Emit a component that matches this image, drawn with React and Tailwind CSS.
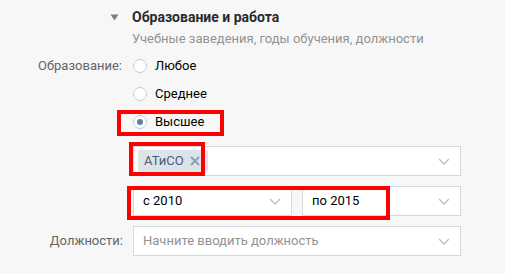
import React from "react";

const Chevron = () => (
  <svg width="12" height="7" viewBox="0 0 12 7" className="shrink-0">
    <path d="M1 1l5 5 5-5" fill="none" stroke="#b6bfc9" strokeWidth="1.3" />
  </svg>
);

const Radio = ({ checked, label }) => (
  <div className="flex items-center h-[28px]">
    <span className="w-[14px] h-[14px] rounded-full border border-[#c1cbd6] bg-white flex items-center justify-center">
      {checked && <span className="w-[6px] h-[6px] rounded-full bg-[#5c7fa6]" />}
    </span>
    <span className="ml-[8px] text-[13px] text-[#000]">{label}</span>
  </div>
);

const Select = ({ children, className = "" }) => (
  <div
    className={`h-[30px] bg-white border border-[#d3d9de] flex items-center pl-[9px] pr-[10px] ${className}`}
  >
    <div className="flex-1 flex items-center text-[13px] text-[#000]">{children}</div>
    <Chevron />
  </div>
);

export default function App() {
  const education = [
    { label: "Любое", checked: false },
    { label: "Среднее", checked: false },
    { label: "Высшее", checked: true },
  ];

  return (
    <div
      className="relative w-[505px] h-[274px] bg-[#f7f7f7] overflow-hidden"
      style={{ fontFamily: "Roboto, 'Noto Sans', sans-serif" }}
    >
      {/* section header */}
      <div className="pt-[8px] pl-[110px]">
        <div className="flex items-center h-[18px]">
          <span className="w-[22px] flex items-center">
            <svg width="9" height="7" viewBox="0 0 9 7">
              <path d="M0.5 0.5h8l-4 6z" fill="#7d7d7d" />
            </svg>
          </span>
          <span className="text-[14px] font-bold text-[#2a2a2a]">Образование и работа</span>
        </div>
        <div className="pl-[22px] mt-[5px] text-[13px] leading-[16px] text-[#939393]">
          Учебные заведения, годы обучения, должности
        </div>
      </div>

      {/* education */}
      <div className="flex mt-[5px]">
        <div className="w-[122px] text-right text-[13px] text-[#656565] leading-[28px]">
          Образование:
        </div>
        <div className="ml-[11px]">
          {education.map((e) => (
            <Radio key={e.label} label={e.label} checked={e.checked} />
          ))}
        </div>
      </div>

      <div className="flex flex-col gap-[10px] mt-[10px] ml-[133px] w-[328px]">
        <Select>
          <span className="inline-flex items-center h-[22px] bg-[#dde3ea] rounded-[2px] pl-[6px] pr-[8px] ml-[-5px] text-[13px] text-[#4a5c72]">
            АТиСО
            <svg width="10" height="10" viewBox="0 0 10 10" className="ml-[6px]">
              <path d="M1 1l8 8M9 1l-8 8" stroke="#8fa1b3" strokeWidth="2" />
            </svg>
          </span>
        </Select>
        <div className="flex gap-[10px]">
          <Select className="flex-1">с 2010</Select>
          <Select className="flex-1">по 2015</Select>
        </div>
      </div>

      <div className="flex items-center mt-[10px]">
        <div className="w-[123px] text-right text-[13px] text-[#656565]">Должности:</div>
        <div className="ml-[10px] w-[328px]">
          <Select>
            <span className="text-[#929292]">Начните вводить должность</span>
          </Select>
        </div>
      </div>

      {/* annotation boxes */}
      <div className="absolute left-[117px] top-[110px] w-[107px] h-[26px] border-[4px] border-[#ff0000]" />
      <div className="absolute left-[129px] top-[142px] w-[76px] h-[34px] border-[4px] border-[#ff0000]" />
      <div className="absolute left-[127px] top-[186px] w-[263px] h-[34px] border-[4px] border-[#ff0000]" />
    </div>
  );
}
